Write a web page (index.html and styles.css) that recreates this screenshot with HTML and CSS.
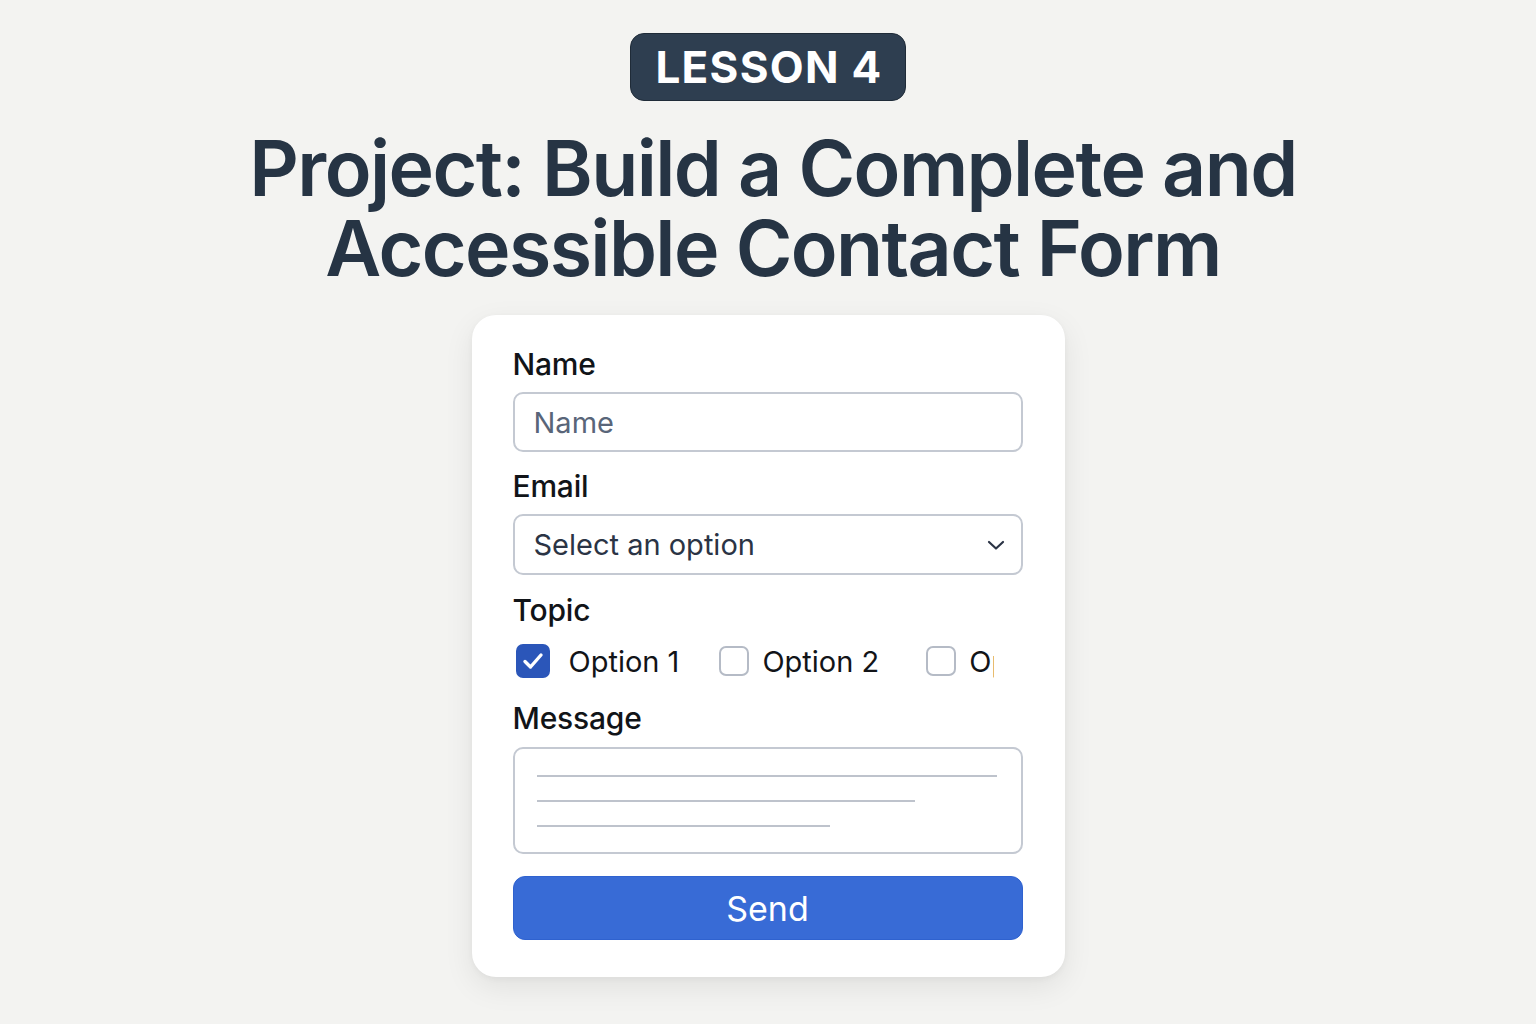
FILE: index.html
```html
<!DOCTYPE html>
<html lang="en">
<head>
<meta charset="utf-8">
<title>Lesson 4</title>
<link rel="stylesheet" href="styles.css">
</head>
<body>
<main class="page">
  <div class="badge">LESSON 4</div>
  <h1 class="title">Project: Build a Complete and<br>Accessible Contact Form</h1>
  <form class="card">
    <label class="label label-first">Name</label>
    <div class="field"><span class="placeholder">Name</span></div>
    <label class="label">Email</label>
    <div class="field select">
      <span class="value">Select an option</span>
      <svg class="chevron" width="18" height="12" viewBox="0 0 18 12"><path d="M2 3 L9 9.5 L16 3" fill="none" stroke="#2b3445" stroke-width="2.2" stroke-linecap="round" stroke-linejoin="round"/></svg>
    </div>
    <label class="label label-topic">Topic</label>
    <div class="checks">
      <div class="check check-1">
        <span class="box box-on"><svg width="26" height="26" viewBox="0 0 26 26"><path d="M5 13.5 L10.5 19 L21 7" fill="none" stroke="#fff" stroke-width="3.4" stroke-linecap="round" stroke-linejoin="round"/></svg></span>
        <span class="opt">Option 1</span>
      </div>
      <div class="check check-2">
        <span class="box"></span>
        <span class="opt">Option 2</span>
      </div>
      <div class="check check-3">
        <span class="box"></span>
        <span class="opt">Option 3</span>
      </div>
    </div>
    <label class="label label-msg">Message</label>
    <div class="textarea">
      <span class="line line-1"></span>
      <span class="line line-2"></span>
      <span class="line line-3"></span>
    </div>
    <button type="button" class="send">Send</button>
  </form>
</main>
</body>
</html>
```

FILE: styles.css
```css
* { box-sizing: border-box; }
html, body { margin: 0; padding: 0; }
body {
  background: #f3f3f1;
  font-family: Inter, "Noto Sans", "Liberation Sans", sans-serif;
  width: 1536px;
  height: 1024px;
  overflow: hidden;
}
.page {
  display: flex;
  flex-direction: column;
  align-items: center;
  padding-top: 33px;
}
.badge {
  width: 276px;
  height: 68px;
  background: #2e3e50;
  border-radius: 14px;
  color: #fff;
  font-weight: 700;
  font-size: 44px;
  letter-spacing: 1.3px;
  display: flex;
  align-items: center;
  justify-content: center;
  padding-left: 2px;
  border: 1px solid #1f2b38;
}
.title {
  margin: 27px 0 0;
  padding-left: 10px;
  text-align: center;
  font-size: 77px;
  line-height: 80px;
  font-weight: 600;
  color: #263444;
  letter-spacing: -1.6px;
}
.card {
  margin-top: 27px;
  width: 593px;
  background: #fff;
  border-radius: 24px;
  box-shadow: 0 10px 30px rgba(0,0,0,0.08), 0 2px 6px rgba(0,0,0,0.04);
  padding: 31px 42px 37px 41px;
  display: flex;
  flex-direction: column;
}
.label {
  display: block;
  font-size: 30px;
  line-height: 36px;
  font-weight: 500;
  color: #111418;
  margin-top: 16px;
  margin-bottom: 10px;
  letter-spacing: -0.2px;
}
.label-first { margin-top: 0; }
.label-topic { margin-top: 17px; }
.label-msg { margin-top: 19px; margin-bottom: 11px; }
.field {
  height: 60px;
  border: 2px solid #c4c9d2;
  border-radius: 10px;
  display: flex;
  align-items: center;
  padding-left: 19px;
  font-size: 29px;
  font-weight: 400;
}
.placeholder { color: #596579; }
.select { justify-content: space-between; padding-right: 16px; height: 61px; }
.value { color: #2b3445; }
.chevron { display: block; }
.checks {
  display: flex;
  align-items: center;
  height: 40px;
  width: 481px;
  overflow: hidden;
  white-space: nowrap;
  margin-top: 3px;
}
.check { display: flex; align-items: center; flex-shrink: 0; }
.box {
  width: 30px;
  height: 30px;
  border: 2px solid #b5bbc6;
  border-radius: 7px;
  display: flex;
  align-items: center;
  justify-content: center;
}
.box-on {
  width: 34px;
  height: 34px;
  background: #2b56b9;
  border-color: #2b56b9;
  margin-left: 3px;
}
.opt {
  font-size: 29px;
  color: #121418;
  margin-left: 13px;
}
.check-1 .opt { margin-left: 19px; }
.check-2 { margin-left: 40px; }
.check-3 { margin-left: 47px; }
.textarea {
  height: 107px;
  border: 2px solid #c4c9d2;
  border-radius: 10px;
  padding: 26px 0 0 22px;
  display: flex;
  flex-direction: column;
  gap: 23px;
}
.line {
  display: block;
  height: 2px;
  background: #bec3cc;
}
.line-1 { width: 460px; }
.line-2 { width: 378px; }
.line-3 { width: 293px; }
.send {
  margin-top: 22px;
  height: 64px;
  border: 1px solid #2f62cf;
  border-radius: 12px;
  background: #386bd6;
  color: #fff;
  font-family: Inter, "Noto Sans", "Liberation Sans", sans-serif;
  font-size: 34px;
  font-weight: 400;
  padding: 0;
}
```
